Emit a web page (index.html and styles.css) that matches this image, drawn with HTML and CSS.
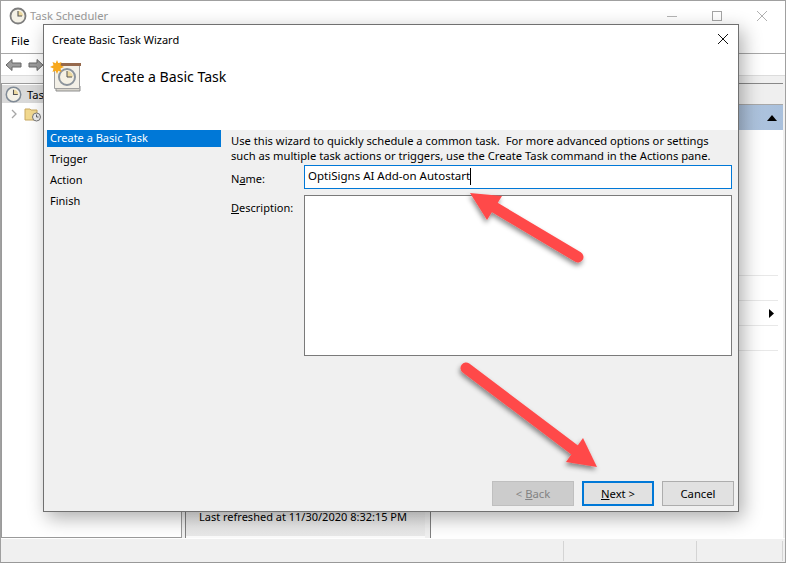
FILE: index.html
```html
<!DOCTYPE html>
<html lang="en">
<head>
<meta charset="utf-8">
<title>Task Scheduler</title>
<link rel="stylesheet" href="styles.css">
</head>
<body>
<div class="app">
  <header class="titlebar">
    <svg class="clock-ico" width="18" height="18" viewBox="0 0 18 18"><circle cx="9" cy="9" r="7.5" fill="#f4f1e6" stroke="#7d7d7d" stroke-width="1.8"/><path d="M9 4a5 5 0 0 1 5 5H9z" fill="#ecd9a0"/><path d="M9 4v5h4" fill="none" stroke="#555" stroke-width="1.1"/></svg>
    <span class="apptitle">Task Scheduler</span>
    <div class="winctrls">
      <svg width="10" height="10" viewBox="0 0 10 10"><path d="M0 5.5h10" stroke="#b5b5b5"/></svg>
      <svg width="10" height="10" viewBox="0 0 10 10"><rect x=".5" y=".5" width="9" height="9" fill="none" stroke="#a5a5a5"/></svg>
      <svg width="10" height="10" viewBox="0 0 10 10"><path d="M0 0l10 10M10 0L0 10" stroke="#b0b0b0"/></svg>
    </div>
  </header>
  <nav class="menubar"><span>File</span></nav>
  <div class="toolbar">
    <svg width="17" height="14" viewBox="0 0 17 14"><path d="M1 7l6-5.5V5h9v4H7v3.500z" fill="#9c9c9c" stroke="#666"/></svg>
    <svg width="16" height="14" viewBox="0 0 16 14"><path d="M15 7L9 1.500V5H1v4h8v3.500z" fill="#9c9c9c" stroke="#666"/></svg>
  </div>
  <main class="panes">
    <aside class="tree">
      <div class="tree-row selected">
        <svg width="17" height="17" viewBox="0 0 16 16"><circle cx="8" cy="8" r="6.8" fill="#f4f1e6" stroke="#7f8a96" stroke-width="1.4"/><path d="M8 3.500a4.500 4.500 0 0 1 4.500 4.500H8z" fill="#ecd9a0"/><path d="M8 3.500V8h4" fill="none" stroke="#555"/></svg>
        <span>Task Scheduler (Local)</span>
      </div>
      <div class="tree-row child">
        <svg class="chev" width="6" height="10" viewBox="0 0 6 10"><path d="M1 1l4 4-4 4" fill="none" stroke="#a6a6a6" stroke-width="1.3"/></svg>
        <svg width="18" height="16" viewBox="0 0 18 16"><path d="M1 3h5l1 1h6v10H1z" fill="#f2d98f" stroke="#c8a860"/><circle cx="12.500" cy="11" r="4" fill="#eee" stroke="#777"/><path d="M12.500 8.500V11h2" fill="none" stroke="#444" stroke-width=".8"/></svg>
      </div>
    </aside>
    <section class="center">
      <div class="center-main"></div>
      <div class="refreshed">Last refreshed at 11/30/2020 8:32:15 PM</div>
    </section>
    <aside class="actions">
      <div class="actions-top"></div>
      <div class="actions-band"></div>
      <div class="actions-head"><svg width="10" height="6" viewBox="0 0 10 6"><path d="M5 0l5 6H0z" fill="#000"/></svg></div>
      <div class="actions-gap"></div>
      <div class="action-row"></div>
      <div class="action-row has-arrow"><svg width="5" height="9" viewBox="0 0 5 9"><path d="M0 0l5 4.500L0 9z" fill="#000"/></svg></div>
      <div class="action-row"></div>
      <div class="action-row"></div>
    </aside>
  </main>
  <footer class="statusbar"><div class="st st1"></div><div class="st st2"></div><div class="st st3"></div></footer>
</div>

<div class="dialog">
  <div class="dlg-title">
    <span>Create Basic Task Wizard</span>
    <svg width="10" height="10" viewBox="0 0 10 10"><path d="M0 0l10 10M10 0L0 10" stroke="#111" stroke-width="1"/></svg>
  </div>
  <div class="dlg-head">
    <svg class="wiz-ico" width="32" height="32" viewBox="0 0 32 32">
      <path d="M6 26h24v5H6z" fill="#d8d5cc" stroke="#8f8f8f"/>
      <path d="M4.500 5.500h25v23h-25z" fill="#f3f0e7" stroke="#a0a0a0"/>
      <path d="M7 3h24v3H7z" fill="#96694c"/>
      <circle cx="17" cy="17" r="8" fill="#f5f1e4" stroke="#8c949c" stroke-width="2"/>
      <path d="M17 11a6 6 0 0 1 6 6h-6z" fill="#ecd9a0"/>
      <path d="M17 11v6h5" fill="none" stroke="#555"/>
      <path d="M7 0l1.300 3.200L11.500 2l-1 3.300L14 7l-3.500 1.500 1 3.500-3.200-1.300L7 14l-1.300-3.300L2.500 12l1-3.500L0 7l3.500-1.700-1-3.300 3.200 1.200z" fill="#f7a81c"/>
    </svg>
    <h1>Create a Basic Task</h1>
  </div>
  <div class="dlg-body">
    <ul class="steps">
      <li class="current">Create a Basic Task</li>
      <li>Trigger</li>
      <li>Action</li>
      <li>Finish</li>
    </ul>
    <div class="form">
      <p class="intro">Use this wizard to quickly schedule a common task.&nbsp; For more advanced options or settings<br>such as multiple task actions or triggers, use the Create Task command in the Actions pane.</p>
      <div class="frow name-row">
        <label>N<u>a</u>me:</label>
        <div class="field focus"><span class="typed">OptiSigns AI Add-on Autostart</span></div>
      </div>
      <div class="frow desc-row">
        <label><u>D</u>escription:</label>
        <div class="field area"></div>
      </div>
    </div>
  </div>
  <div class="dlg-foot">
    <button class="btn disabled" type="button">&lt; <u>B</u>ack</button>
    <button class="btn primary" type="button"><u>N</u>ext &gt;</button>
    <button class="btn" type="button">Cancel</button>
  </div>
</div>

<svg class="arrows" width="786" height="563" viewBox="0 0 786 563">
  <defs><filter id="ds" x="-20%" y="-20%" width="140%" height="140%"><feDropShadow dx="-1" dy="3" stdDeviation="2.5" flood-color="#000" flood-opacity=".45"/></filter></defs>
  <g filter="url(#ds)" fill="#ff4a4a">
    <path d="M578 257L494 207" stroke="#ff4a4a" stroke-width="11" stroke-linecap="round"/>
    <path d="M470 193L502 196L487 220z"/>
    <path d="M466 368L576 451" stroke="#ff4a4a" stroke-width="11" stroke-linecap="round"/>
    <path d="M597 467L583 438L566 462z"/>
  </g>
</svg>
</body>
</html>
```
FILE: styles.css
```css
* { box-sizing: border-box; }
html, body { margin: 0; height: 100%; overflow: hidden; }
body { font-family: "Noto Sans", "Liberation Sans", sans-serif; font-size: 11.2px; color: #000; background: #fff; }

.app { width: 786px; height: 563px; border: 1px solid #a0a0a0; border-bottom-color: #999; display: flex; flex-direction: column; background: #fff; }

.titlebar { height: 29px; flex: none; display: flex; align-items: center; padding: 0 18px 0 8px; gap: 3px; }
.apptitle { font-size: 11.2px; color: #9a9a9a; }
.winctrls { margin-left: auto; display: flex; gap: 35px; }
.winctrls svg { display: block; }

.menubar { height: 24px; flex: none; padding: 3px 0 0 10px; border-bottom: 1px solid #a8a8a8; font-size: 11.5px; }

.toolbar { height: 22px; flex: none; display: flex; align-items: center; gap: 6px; padding-left: 4px; background: #fff; border-bottom: 1px solid #dcdcdc; }

.panes { flex: 1; min-height: 0; display: flex; padding-top: 7px; background: #f0f0f0; border-bottom: 1px solid #fff; }

.tree { width: 181px; flex: none; background: #fff; border: 1px solid #9a9a9a; padding-top: 1px; overflow: hidden; }
.tree-row { height: 18px; display: flex; align-items: center; white-space: nowrap; gap: 5px; padding-left: 3px; }
.tree-row.selected { background: #d9d9d9; }
.tree-row.child { padding-left: 9px; margin-top: 2px; gap: 7px; }

.center { width: 240px; flex: none; margin-left: 3px; border-left: 1px solid #808080; display: flex; flex-direction: column; }
.center-main { flex: 1; background: #fff; }
.refreshed { height: 32px; flex: none; padding: 3px 0 0 13px; font-size: 11px; background: linear-gradient(#ececec, #e8e8e8); border-bottom: 2px solid #fafafa; white-space: nowrap; }

.actions { flex: 1; margin-left: 5px; margin-right: 2px; border-left: 1px solid #808080; display: flex; flex-direction: column; background: #fff; }
.actions-top { height: 1px; background: #888; }
.actions-band { height: 21px; background: #efefef; border-bottom: 1px solid #a8a8a8; }
.actions-head { height: 25px; display: flex; align-items: center; justify-content: flex-end; padding-right: 6px; background: linear-gradient(90deg, #dfe8f2, #a9c0dc); }
.actions-gap { height: 145px; }
.action-row { height: 25px; margin-right: 5px; border-top: 1px solid #e8e8e8; display: flex; align-items: center; justify-content: flex-end; padding-right: 4px; }

.statusbar { height: 23px; flex: none; display: flex; background: #f0f0f0; padding-top: 2px; padding-bottom: 1px; }
.st { border-right: 1px solid #d4d4d4; }
.st1 { width: 563px; }
.st2 { width: 133px; }
.st3 { width: 86px; }

.dialog { position: absolute; left: 43px; top: 24px; width: 696px; height: 488px; background: #f0f0f0; border: 1px solid #707070; box-shadow: 4px 6px 18px rgba(0,0,0,.32); display: flex; flex-direction: column; }
.dlg-title { height: 28px; flex: none; display: flex; align-items: center; justify-content: space-between; padding: 0 10px 0 8px; background: #fff; font-size: 11px; }
.dlg-head { height: 77px; flex: none; display: flex; gap: 19px; padding-left: 6px; padding-top: 7px; background: #fff; }
.dlg-head h1 { margin: 0; font-size: 14.1px; font-weight: 400; line-height: 34px; height: 34px; }
.wiz-ico { flex: none; display: block; }

.dlg-body { flex: 1; min-height: 0; display: flex; padding-left: 3px; }
.steps { list-style: none; margin: 0; padding: 0; width: 174px; flex: none; font-size: 11px; }
.steps li { height: 21px; padding: 0 0 0 3px; line-height: 16px; }
.steps li.current { height: 17px; margin-bottom: 4px; background: #0078d7; color: #fff; }
.form { flex: 1; min-width: 0; padding: 3px 6px 0 10px; }
.intro { margin: 0; line-height: 15px; white-space: nowrap; }
.frow { display: flex; }
.frow label { width: 73px; flex: none; padding-top: 6px; white-space: nowrap; font-size: 11px; }
.desc-row label { padding-top: 5px; }
.name-row { margin-top: 2px; }
.desc-row { margin-top: 6px; }
.field { flex: 1; min-width: 0; border: 1px solid #7a7a7a; background: #fff; }
.field.focus { height: 24px; border-color: #0078d7; padding: 2px 0 0 3px; line-height: 16px; font-size: 11.5px; }
.typed { border-right: 1px solid #000; display: inline-block; height: 17px; }
.field.area { height: 161px; }

.dlg-foot { height: 30px; flex: none; display: flex; justify-content: flex-end; gap: 8px; padding-right: 4px; padding-bottom: 5px; }
.btn { width: 72px; height: 25px; padding: 0; font: inherit; font-size: 11.25px; color: #000; background: #e1e1e1; border: 1px solid #adadad; }
.btn.disabled { width: 82px; background: #ccc; border-color: #bfbfbf; color: #838383; }
.btn.primary { border: 2px solid #0078d7; }

.arrows { position: absolute; left: 0; top: 0; pointer-events: none; }
```
